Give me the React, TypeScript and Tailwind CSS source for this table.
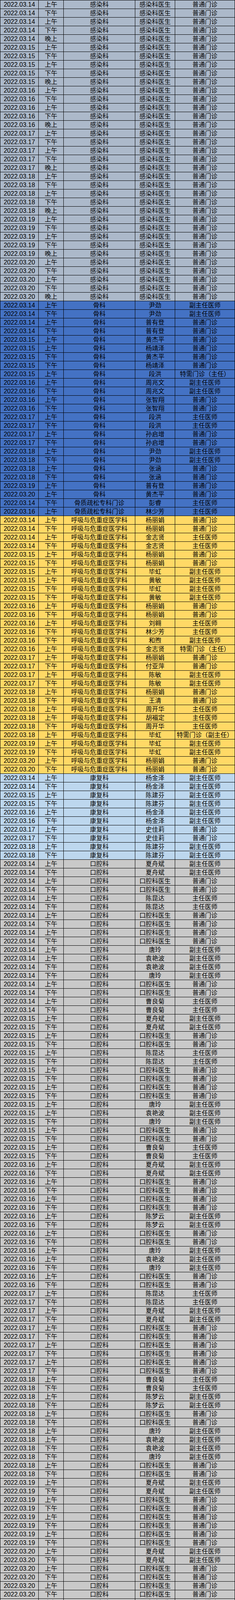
import React from 'react';

const T: Record<string, string> = {
  P: '普通门诊',
  F: '副主任医师',
  Z: '主任医师',
  T1: '特需门诊（主任）',
  T2: '特需门诊（副主任）',
};
const PER: Record<string, string> = { s: '上午', x: '下午', w: '晚上' };

type Row = { date: string; period: string; dept: string; doc: string; title: string; bg: string };

function build(dept: string, bg: string, data: string): Row[] {
  return data
    .trim()
    .split(',')
    .map((e) => {
      const [d, p, doc, t, dp] = e.trim().split(/\s+/);
      return {
        date: '2022.03.' + d,
        period: PER[p],
        dept: dp ?? dept,
        doc: doc === 'K' ? '口腔科医生' : doc,
        title: T[t],
        bg,
      };
    });
}

const ganran: Row[] = [];
['14', '15', '16', '17', '18', '19', '20'].forEach((d) => {
  ['s', 'x', 's', 'x', 'w'].forEach((p) => {
    ganran.push({ date: '2022.03.' + d, period: PER[p], dept: '感染科', doc: '感染科医生', title: T.P, bg: 'bg-[#acb9ca]' });
  });
});

const guke = build(
  '骨科',
  'bg-[#4472c4]',
  `14 s 尹劲 F,14 x 尹劲 F,14 s 普有登 P,14 x 普有登 P,15 s 黄杰平 P,15 s 杨靖泽 P,15 x 黄杰平 P,15 x 杨靖泽 P,15 s 段洪 T1,
   16 s 周兆文 F,16 x 周兆文 F,16 s 张智翔 P,16 x 张智翔 P,17 s 段洪 Z,17 x 段洪 Z,17 s 孙启增 P,17 x 孙启增 P,
   18 s 尹劲 F,18 x 尹劲 F,18 s 张涵 P,18 x 张涵 P,19 s 普有登 P,20 s 黄杰平 P,
   14 x 彭睿 Z 骨质疏松专科门诊,16 s 林少芳 Z 骨质疏松专科门诊`
);

const huxi = build(
  '呼吸与危重症医学科',
  'bg-[#ffd966]',
  `14 s 杨丽娟 P,14 x 杨丽娟 P,14 s 金志贤 Z,14 x 金志贤 Z,15 s 杨丽娟 P,15 x 杨丽娟 P,15 s 毕虹 F,15 s 黄敏 F,15 x 毕虹 F,15 x 黄敏 F,
   16 s 杨丽娟 P,16 x 杨丽娟 P,16 s 刘翱 Z,16 x 林少芳 Z,16 x 和煦 F,16 s 金志贤 T1,
   17 s 杨丽娟 P,17 x 付亚萍 P,17 s 陈敏 F,17 x 陈敏 F,
   18 s 杨丽娟 P,18 x 王清 P,18 s 周开华 Z,18 s 胡福定 Z,18 x 周开华 Z,18 s 毕虹 T2,
   19 s 毕虹 F,19 x 毕虹 F,20 s 杨丽娟 P,20 x 杨丽娟 P`
);

const kangfu = build(
  '康复科',
  'bg-[#bdd7ee]',
  `14 s 杨金泽 F,14 x 杨金泽 F,15 s 陈建芬 F,15 x 陈建芬 F,16 s 杨金泽 F,16 x 杨金泽 F,17 s 史佳莉 P,17 x 史佳莉 P,18 s 陈建芬 F,18 x 陈建芬 F`
);

const kouqiang = build(
  '口腔科',
  'bg-[#c9c9c9]',
  `14 s 夏舟斌 F,14 x 夏舟斌 F,14 s K P,14 x K P,14 s 陈昆达 Z,14 x 陈昆达 Z,14 s K P,14 x K P,14 s K P,14 x K P,
   14 s 唐玲 F,14 s 袁艳波 F,14 x 袁艳波 F,14 x 唐玲 F,14 s K P,14 x K P,14 s 曹良菊 Z,14 x 曹良菊 Z,
   15 s 夏舟斌 F,15 x 夏舟斌 F,15 s K P,15 x K P,15 s 陈昆达 Z,15 x 陈昆达 Z,15 s K P,15 x K P,15 s K P,15 x K P,
   15 s 唐玲 F,15 s 袁艳波 F,15 x 唐玲 F,15 s K P,15 x K P,15 s 曹良菊 Z,15 x 曹良菊 Z,
   16 s 夏舟斌 F,16 x 夏舟斌 F,16 s K P,16 x K P,16 s K P,16 x K P,16 s 陈梦云 F,16 x 陈梦云 F,16 s K P,16 x K P,
   16 s 唐玲 F,16 s 袁艳波 F,16 x 唐玲 F,16 s K P,16 x K P,
   17 s 陈昆达 Z,17 x 陈昆达 Z,17 s 夏舟斌 F,17 x 夏舟斌 F,17 s K P,17 x K P,17 s K P,17 x K P,17 s K P,17 x K P,
   18 s 曹良菊 Z,18 x 曹良菊 Z,18 s 陈梦云 F,18 x 陈梦云 F,18 s K P,18 x K P,18 s 唐玲 F,18 s 袁艳波 F,18 x 袁艳波 F,18 x 唐玲 F,18 s K P,18 x K P,
   19 s 夏舟斌 F,19 x 夏舟斌 F,19 s K P,19 x K P,19 s K P,19 x K P,19 s K P,19 x K P,
   20 s 夏舟斌 F,20 x 夏舟斌 F,20 s K P,20 x K P,20 s K P,20 x K P,20 s K P,20 x K P`
);

const miniao = build(
  '泌尿外科',
  'bg-[#2e75b6]',
  `14 s 李泽惠 Z,14 x 李泽惠 Z,15 s 孙洵 Z,15 x 吴兆祥 F,16 s 吴兆祥 F,16 x 吴兆祥 F,17 s 吴兆祥 F,17 x 吴兆祥 F,18 s 吴兆祥 F,18 x 吴兆祥 F,19 s 吴兆祥 F,20 s 吴兆祥 F`
);

const rows: Row[] = [...ganran, ...guke, ...huxi, ...kangfu, ...kouqiang, ...miniao];

function Cell({ children }: { children: React.ReactNode }) {
  return (
    <div className="flex h-[21px] items-center justify-center overflow-hidden whitespace-nowrap border-r border-black text-[16px] leading-[21px]">
      {children}
    </div>
  );
}

function WeChatIcon() {
  return (
    <svg width="30" height="26" viewBox="0 0 30 26" className="block">
      <path d="M11 1.5C5.5 1.5 1.5 5.2 1.5 9.6c0 2.6 1.4 4.8 3.6 6.3l-0.9 2.8 3.3-1.7c1.1 0.3 2.2 0.5 3.5 0.5 5.5 0 9.5-3.7 9.5-8 0-4.3-4-8-9.5-8z" fill="#eeeeee" stroke="#8c8c8c" strokeWidth="1" />
      <circle cx="7.6" cy="7.6" r="1.3" fill="#7a7a7a" />
      <circle cx="14" cy="7.6" r="1.3" fill="#7a7a7a" />
      <path d="M20 10.5c-4.6 0-8 3-8 6.6 0 3.7 3.4 6.6 8 6.6 1 0 2-0.2 2.9-0.4l2.7 1.4-0.7-2.3c1.9-1.2 3.1-3.1 3.1-5.3 0-3.6-3.4-6.6-8-6.6z" fill="#f7f7f7" stroke="#8c8c8c" strokeWidth="1" />
      <circle cx="17.3" cy="15.6" r="1.1" fill="#7a7a7a" />
      <circle cx="22.7" cy="15.6" r="1.1" fill="#7a7a7a" />
    </svg>
  );
}

export default function App() {
  return (
    <div className="relative h-[4401px] w-[601px] overflow-hidden border-t border-black text-black [font-family:'Liberation_Sans','Noto_Sans_CJK_SC',sans-serif]">
      {rows.map((r, i) => (
        <div
          key={i}
          className={`grid h-[22px] max-h-[22px] grid-cols-[98px_64px_183px_102px_153px] grid-rows-[21px] overflow-hidden border-b border-l border-black ${r.bg}`}
        >
          <Cell>{r.date}</Cell>
          <Cell>{r.period}</Cell>
          <Cell>{r.dept}</Cell>
          <Cell>{r.doc}</Cell>
          <Cell>{r.title}</Cell>
        </div>
      ))}
      <div className="absolute left-[369px] top-[4359px] flex items-center gap-[3px]">
        <WeChatIcon />
        <span className="text-[15px] leading-none text-white [text-shadow:0_0_2px_#333,0_0_1px_#333]">
          昆明市第一人民医院北院区
        </span>
      </div>
    </div>
  );
}
